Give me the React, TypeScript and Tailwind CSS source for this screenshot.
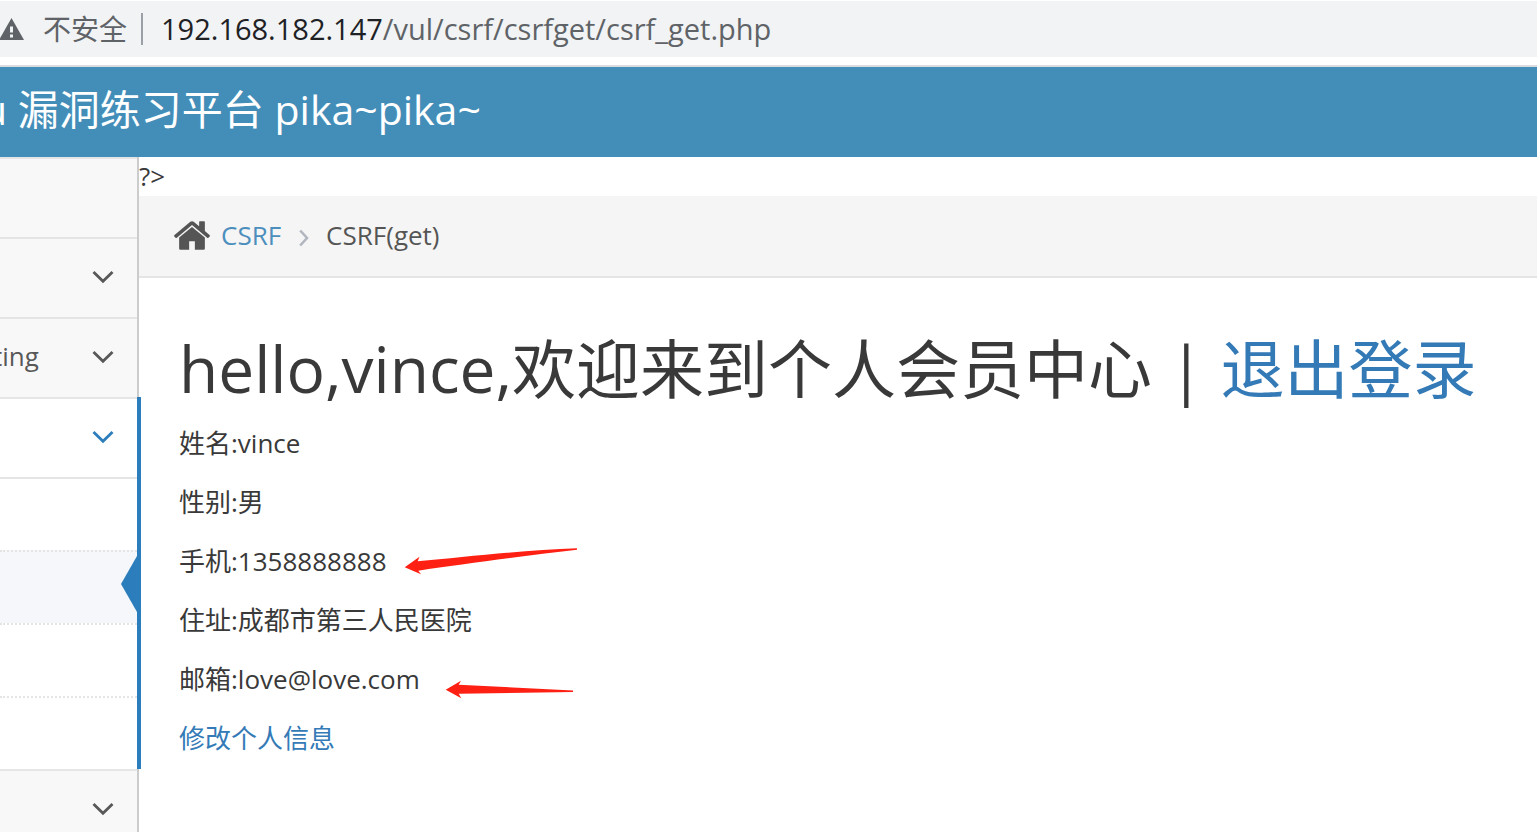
type MenuItem = {
  label: string;
  expandable: boolean;
  active?: boolean;
  children?: { id: number; current?: boolean }[];
};

const menu: MenuItem[] = [
  { label: '', expandable: false },
  { label: '', expandable: true },
  { label: 'ting', expandable: true },
  {
    label: '',
    expandable: true,
    active: true,
    children: [{ id: 1 }, { id: 2, current: true }, { id: 3 }, { id: 4 }],
  },
  { label: '', expandable: true },
];

const profile = [
  { name: '姓名', value: 'vince' },
  { name: '性别', value: '男' },
  { name: '手机', value: '1358888888' },
  { name: '住址', value: '成都市第三人民医院' },
  { name: '邮箱', value: 'love@love.com' },
];

function ChevronDown() {
  return (
    <svg className="w-[22px] h-[14px]" viewBox="0 0 22 14" fill="none" aria-hidden="true">
      <path d="M1.5 2 L11 11.2 L20.5 2" stroke="currentColor" strokeWidth="2.8" />
    </svg>
  );
}

function AddressBar() {
  return (
    <div className="bg-white pt-px border-b-2 border-[#dadce0]">
      <div className="flex items-center h-14 mb-2 bg-[#f1f3f4] text-[#5f6368] whitespace-nowrap">
        <button type="button" className="flex items-center gap-[19px] text-[28px]">
          <svg className="w-6 h-6" viewBox="0 0 24 24" aria-hidden="true">
            <path d="M11.5 1 L24 23 H-1 Z" fill="#5f6368" />
            <path d="M10 9.5 h3 v6 h-3 z M10 17.5 h3 v3 h-3 z" fill="#f1f3f4" />
          </svg>
          <span>不安全</span>
        </button>
        <div className="w-0.5 h-8 ml-[14px] mr-[18px] bg-[#9aa0a6]" />
        <div className="pb-0.5 text-[29px]">
          <span className="text-[#202124]">192.168.182.147</span>
          <span>/vul/csrf/csrfget/csrf_get.php</span>
        </div>
      </div>
    </div>
  );
}

function Sidebar() {
  return (
    <nav className="w-[139px] shrink-0 bg-[#f8f8f8] border-r-2 border-[#ccc]">
      <ul>
        {menu.map((item, idx) => (
          <li key={idx} className={item.active ? 'relative bg-white' : ''}>
            <button
              type="button"
              aria-label={item.label || `menu ${idx + 1}`}
              className={`flex items-center justify-between w-full h-20 pr-[23px] pb-[3px] border-t-2 border-[#e5e5e5] ${
                item.active ? 'text-[#2b7dbc]' : 'text-[#585858]'
              }`}
            >
              <span className="-ml-[7px]">{item.label}</span>
              {item.expandable && <ChevronDown />}
            </button>

            {item.children && (
              <ul>
                {item.children.map((child, i) => (
                  <li
                    key={child.id}
                    className={`relative h-[73px] border-t-2 ${i === 0 ? 'border-[#e5e5e5]' : 'border-dotted border-[#e4e4e4]'} ${
                      child.current ? 'bg-[#f5f7fa]' : ''
                    }`}
                  >
                    {child.current && (
                      <svg className="absolute right-0 top-0.5 w-4 h-[60px]" viewBox="0 0 16 60" aria-hidden="true">
                        <path d="M16 2 L0 30 L16 58 Z" fill="#2b7dbc" />
                      </svg>
                    )}
                  </li>
                ))}
              </ul>
            )}

            {/* active group marker */}
            {item.active && <div className="absolute top-0 bottom-0 -right-1 w-1 bg-[#2b7dbc]" />}
          </li>
        ))}
      </ul>
    </nav>
  );
}

function Breadcrumb() {
  return (
    <div className="flex items-center h-[82px] pl-[35px] pb-0.5 bg-[#f5f5f5] border-b-2 border-[#e5e5e5]">
      <svg className="w-9 h-[29px] mr-[11px]" viewBox="26 253 1612 1283" fill="#555" aria-hidden="true">
        <path d="M1408 992v480q0 26-19 45t-45 19H960v-384H704v384H320q-26 0-45-19t-19-45V992q0-1 .5-3t.5-3l575-474 575 474q1 2 1 6zm223-69l-62 74q-8 9-21 11h-3q-13 0-21-7L832 424 140 1001q-12 8-24 7-13-2-21-11l-62-74q-8-10-7-23.5t11-21.5l719-599q32-26 76-26t76 26l244 204V288q0-14 9-23t23-9h192q14 0 23 9t9 23v408l219 182q10 8 11 21.5t-7 23.5z" />
      </svg>
      <a href="#csrf" className="text-[#4c8fbd]">CSRF</a>
      <svg className="w-[10px] h-[18px] ml-[18px] mr-[17px] mt-[5px]" viewBox="0 0 10 18" fill="none" aria-hidden="true">
        <path d="M1.2 1.5 L8 9 L1.2 16.5" stroke="#b2b6bf" strokeWidth="2.6" />
      </svg>
      <span className="text-[#555]">CSRF(get)</span>
    </div>
  );
}

function Profile() {
  return (
    <section className="px-10 pt-14">
      <h1 className="mb-5 text-[64px] leading-[70px] whitespace-nowrap">
        hello,vince,欢迎来到个人会员中心 | <a href="#logout" className="text-[#337ab7]">退出登录</a>
      </h1>

      {profile.map((row) => (
        <p key={row.name} className="relative mb-5">
          {row.name}:{row.value}
          {row.name === '手机' && (
            <svg className="absolute left-[225px] top-[5px] w-[174px] h-7" viewBox="0 0 174 28" fill="#ff2014" aria-hidden="true">
              <path d="M0.7 20.3 L15.5 9.7 L13.7 14.3 C60 10 120 3 173 1.2 L173 2.8 C120 9 60 17 14.3 23.7 L17 27.2 Z" />
            </svg>
          )}
          {row.name === '邮箱' && (
            <svg className="absolute left-[266px] top-[19px] w-32 h-5" viewBox="0 0 128 20" fill="#ff2014" aria-hidden="true">
              <path d="M0.7 10.7 L16 1.7 L13.7 5.7 L128 11.5 L128 13 L13.7 14.7 L16.3 19.3 Z" />
            </svg>
          )}
        </p>
      ))}

      <p>
        <a href="#edit" className="text-[#337ab7]">修改个人信息</a>
      </p>
    </section>
  );
}

export default function App() {
  return (
    <div className="flex flex-col h-screen overflow-hidden bg-white font-['Open_Sans','Noto_Sans_CJK_SC',sans-serif] text-[26px] leading-[39px] text-[#393939]">
      <AddressBar />

      <header className="flex items-center h-[90px] pb-1.5 shrink-0 bg-[#438eb9] text-white text-[41px] whitespace-nowrap">
        <span className="-ml-[18px]">u 漏洞练习平台 pika~pika~</span>
      </header>

      <div className="flex flex-1">
        <Sidebar />
        <main className="flex-1 min-w-0">
          <div>?&gt;</div>
          <Breadcrumb />
          <Profile />
        </main>
      </div>
    </div>
  );
}
